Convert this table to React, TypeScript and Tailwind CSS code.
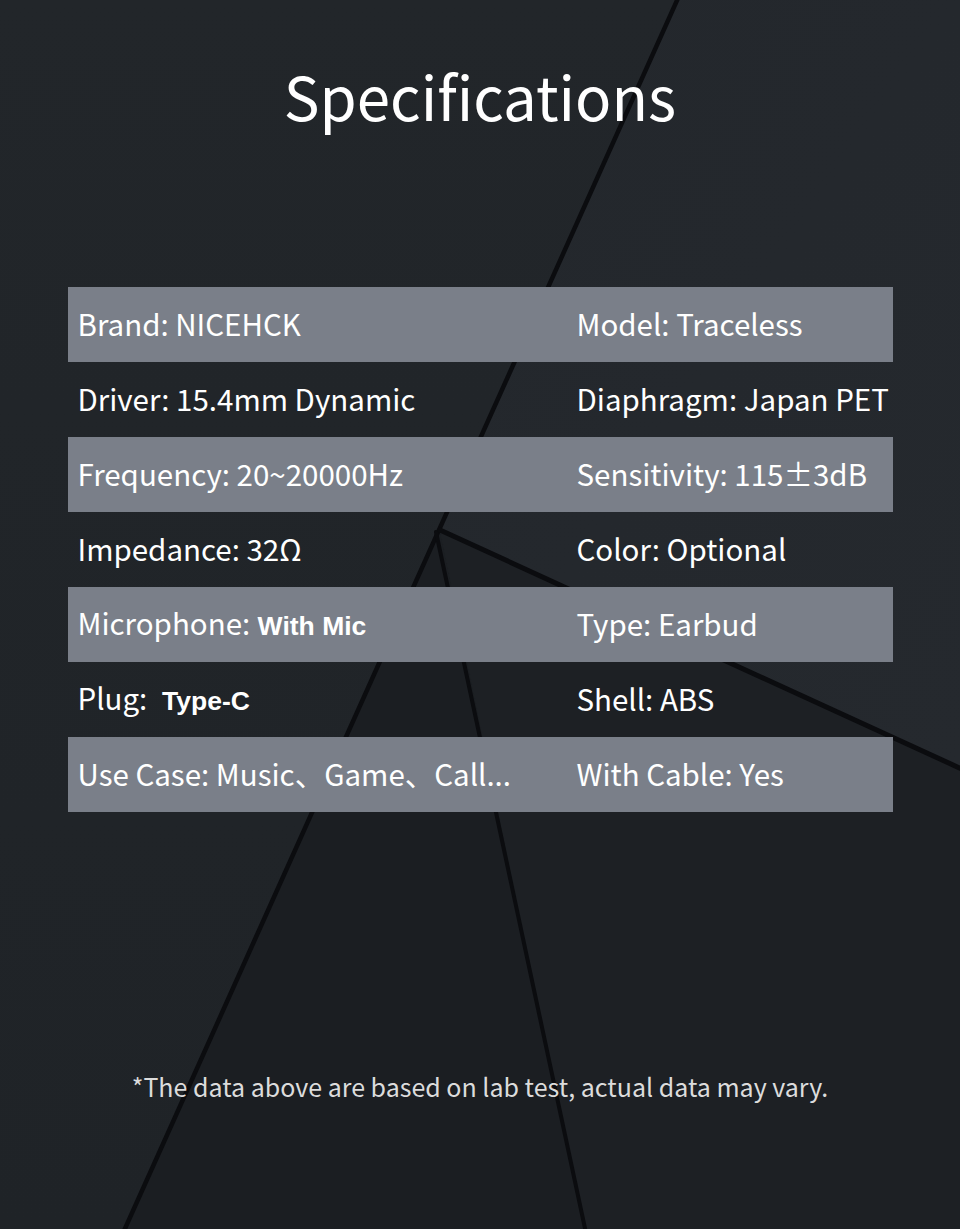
import React from 'react';

type Cell = { label: string; value: string; alt?: boolean; gap?: boolean };

const rows: [Cell, Cell][] = [
  [{ label: 'Brand:', value: 'NICEHCK' }, { label: 'Model:', value: 'Traceless' }],
  [{ label: 'Driver:', value: '15.4mm Dynamic' }, { label: 'Diaphragm:', value: 'Japan PET' }],
  [{ label: 'Frequency:', value: '20~20000Hz' }, { label: 'Sensitivity:', value: '115±3dB' }],
  [{ label: 'Impedance:', value: '32Ω' }, { label: 'Color:', value: 'Optional' }],
  [{ label: 'Microphone:', value: 'With Mic', alt: true }, { label: 'Type:', value: 'Earbud' }],
  [{ label: 'Plug:', value: 'Type-C', alt: true, gap: true }, { label: 'Shell:', value: 'ABS' }],
  [{ label: 'Use Case:', value: 'Music、Game、Call...' }, { label: 'With Cable:', value: 'Yes' }],
];

const SpecText: React.FC<{ cell: Cell }> = ({ cell }) => (
  <span className="whitespace-pre">
    {cell.label}
    {cell.alt ? (
      <span className="font-['Liberation_Sans',sans-serif] font-bold text-[26.5px]">
        {cell.gap ? '  ' : ' '}
        {cell.value}
      </span>
    ) : (
      ' ' + cell.value
    )}
  </span>
);

// Background facets and grooves
const Backdrop: React.FC = () => (
  <svg className="absolute inset-0" width="960" height="1229" viewBox="0 0 960 1229">
    <defs>
      <linearGradient id="bgA" x1="0" y1="0" x2="0" y2="1">
        <stop offset="0" stopColor="#22262a" />
        <stop offset="1" stopColor="#1f2327" />
      </linearGradient>
      <linearGradient id="bgB" x1="0" y1="0" x2="1" y2="1">
        <stop offset="0" stopColor="#23272c" />
        <stop offset="1" stopColor="#25292e" />
      </linearGradient>
    </defs>
    <rect width="960" height="1229" fill="url(#bgA)" />
    {/* upper right facet */}
    <polygon points="677,0 960,0 960,768 440,530" fill="url(#bgB)" />
    {/* middle lower facet */}
    <polygon points="440,530 125,1229 585,1229" fill="#1b1e22" />
    {/* lower right facet */}
    <polygon points="440,530 960,768 960,1229 585,1229" fill="#1d2024" />
    <g stroke="#0b0c0f" strokeLinecap="round">
      <line x1="679" y1="-4" x2="123" y2="1233" strokeWidth="4.5" />
      <line x1="440" y1="530" x2="964" y2="770" strokeWidth="5" />
      <line x1="436" y1="532" x2="586" y2="1233" strokeWidth="4" />
    </g>
  </svg>
);

export default function App() {
  return (
    <div className="relative w-[960px] h-[1229px] overflow-hidden bg-[#212529] font-['Noto_Sans_CJK_SC',sans-serif] text-white">
      <Backdrop />
      <div className="relative flex flex-col items-center">
        <h1 className="mt-[65px] text-[60px] leading-none font-normal">Specifications</h1>
        <div className="mt-[162px] w-[825px] flex flex-col text-[29.5px]">
          {rows.map((row, i) => (
            <div
              key={i}
              className={`h-[75px] flex items-center whitespace-nowrap pb-[2px] ${i % 2 === 0 ? 'bg-[#7a7f89]' : ''}`}
            >
              <div className="w-[510px] shrink-0 pl-[10px]">
                <SpecText cell={row[0]} />
              </div>
              <div className="w-[315px] shrink-0 -ml-px">
                <SpecText cell={row[1]} />
              </div>
            </div>
          ))}
        </div>
        <p className="mt-[262px] text-[25px] leading-none text-[#dcdcdc]">
          *The data above are based on lab test, actual data may vary.
        </p>
      </div>
    </div>
  );
}
